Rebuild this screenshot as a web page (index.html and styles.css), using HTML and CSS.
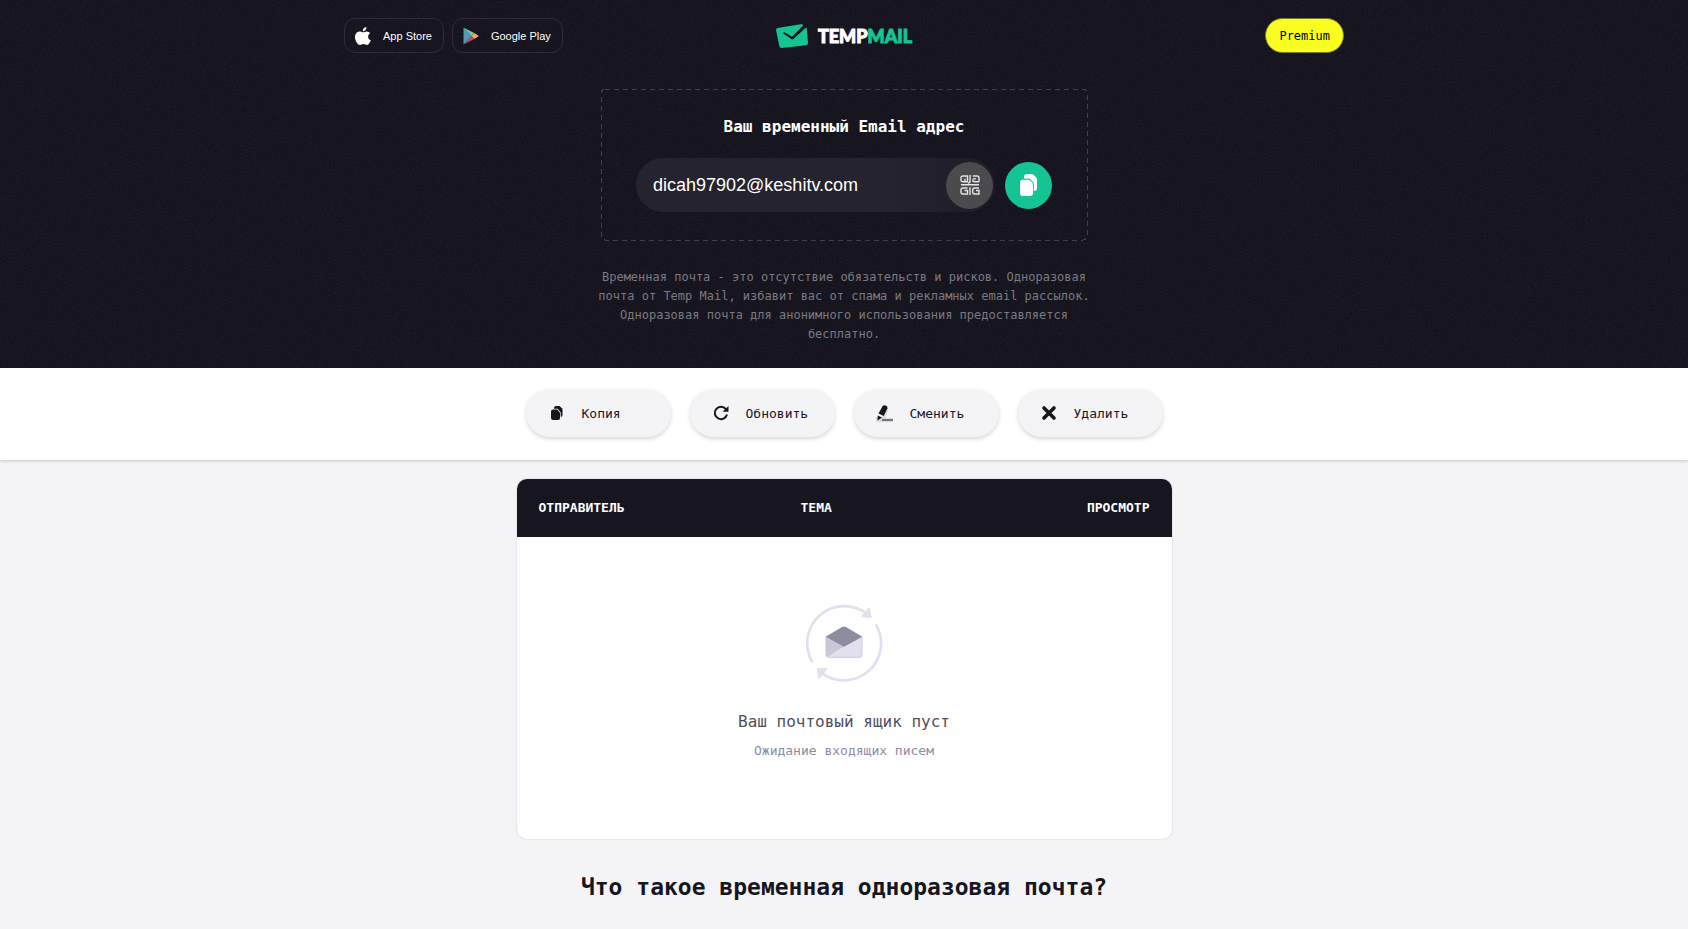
FILE: index.html
```html
<!DOCTYPE html>
<html lang="ru">
<head>
  <meta charset="UTF-8">
  <meta name="viewport" content="width=device-width, initial-scale=1">
  <title>Temp Mail - Временная почта</title>
  <link rel="stylesheet" href="styles.css">
</head>
<body>

  <div class="hero">
    <!-- Grain -->
    <svg class="grain" aria-hidden="true">
      <filter id="noise">
        <feTurbulence type="fractalNoise" baseFrequency="0.5" numOctaves="2" stitchTiles="stitch"/>
        <feColorMatrix type="saturate" values="0"/>
      </filter>
      <rect width="100%" height="100%" filter="url(#noise)"/>
    </svg>

    <!-- Header -->
    <header class="header">
      <div class="stores">
        <a class="store" href="#appstore">
          <svg width="16" height="18" viewBox="0 0 16 18" fill="#fff">
            <path d="M11.4 0c.2 1.2-.3 2.300-1 3.100-.7.8-1.600 1.300-2.600 1.200C7.700 3.100 8.200 2 8.900 1.300 9.500.6 10.600.1 11.400 0z"/>
            <path d="M8.200 5.300c.8 0 1.900-1 3.500-.9 1.500.1 2.700.7 3.400 1.800-3 1.900-2.400 5.800.7 7-.7 2-2.100 4.600-3.800 4.700-1.300 0-1.800-.8-3.500-.8s-2.200.8-3.500.8C2.500 18 0 13.500 0 10.200 0 6.600 2.300 4.500 4.700 4.500c1.500 0 2.600.8 3.500.8z"/>
          </svg>
          <span>App Store</span>
        </a>
        <a class="store" href="#googleplay">
          <svg width="16" height="18" viewBox="0 0 16 18">
            <path fill="#4c9dbb" d="M.5.5v17L8.500 9z"/>
            <path fill="#7fc8a0" d="M.5.5 8.500 9l2.600-2.900z"/>
            <path fill="#f5a862" d="M11.100 6.100 8.500 9l2.600 2.900L16 9z"/>
            <path fill="#d0495f" d="M.5 17.500 8.500 9l2.600 2.900z"/>
          </svg>
          <span>Google Play</span>
        </a>
      </div>

      <a class="logo" href="#home">
        <svg width="32" height="24" viewBox="0 0 96 72">
          <path fill="#14c493" d="M5 12 74 1q6-1 8 2l-4 5-30 30-22-13q-3-1-4 1t1 3l24 17q3 1 5-1L86 14l6-4 4 47q0 6-6 7l-73 8q-6 0-7-6L0 18q0-5 5-6z"/>
        </svg>
        <span class="logo-text">TEMP<span>MAIL</span></span>
      </a>

      <a class="premium" href="#premium">Premium</a>
    </header>

    <!-- Email address -->
    <main class="intro">
      <form class="mailbox">
        <svg class="dashes" aria-hidden="true"><rect width="100%" height="100%" rx="4"/></svg>
        <label class="mailbox-title" for="mail">Ваш временный Email адрес</label>
        <div class="mailbox-row">
          <div class="field">
            <input type="text" id="mail" value="dicah97902@keshitv.com" readonly>
            <button type="button" class="round qr" aria-label="QR код">
              <svg width="20" height="20" viewBox="0 0 20 20" fill="none" stroke="#e4e4e6" stroke-width="1.400">
                <path d="M5 3.700v3H3q-2 0-2-2V3q0-2 2-2h4.500v5.700H5M10 0v6q0 2-2 2M19 6.700h-4.300q-2 0-2-2M12.700 1H17q2 0 2 2v3.700M12.700 3.900H16"/>
                <path d="M1 9.800h18M7.500 13H3q-2 0-2 2v2q0 2 2 2h4.500v-3.500H4.500M10 12.300V20M19 13h-4.300q-2 0-2 2v2q0 2 2 2H19v-3.500h-3"/>
              </svg>
            </button>
          </div>
          <button type="button" class="round copy" aria-label="Копировать">
            <svg width="17" height="22" viewBox="0 0 17 22" fill="#fff">
              <path d="M4 4.500V3q0-3 3-3h4q2 0 3.200 1.200l1.600 1.800Q17 4.200 17 6v8q0 3-3 3h-.2V10.500q0-1.800-1.300-3L11 5.700Q9.800 4.500 8 4.500z"/>
              <path d="M3 5.700h5q1.500 0 2.500 1l1.300 1.400Q13 9.300 13 11v8q0 3-3 3H3q-3 0-3-3V8.700q0-3 3-3z"/>
            </svg>
          </button>
        </div>
      </form>
      <p class="about">Временная почта - это отсутствие обязательств и рисков. Одноразовая почта от Temp Mail, избавит вас от спама и рекламных email рассылок. Одноразовая почта для анонимного использования предоставляется бесплатно.</p>
    </main>
  </div>

  <!-- Actions -->
  <div class="actions">
    <button type="button" class="action">
      <svg width="16" height="16" viewBox="0 0 16 16" fill="#17161f">
        <path d="M5 3.800V3q0-2 2-2h3.500L13.500 3.800V10q0 2-1.800 2V7.500L8.700 3.800z"/>
        <path d="M4 4.500h4.200L11 7.700V13q0 2-2 2H4q-2 0-2-2V6.500q0-2 2-2z"/>
      </svg>
      <span>Копия</span>
    </button>
    <button type="button" class="action">
      <svg width="16" height="16" viewBox="0 0 16 16" fill="none" stroke="#17161f" stroke-width="2">
        <path d="M14 9.500A6.200 6.200 0 1 1 12.800 4"/>
        <path fill="#17161f" stroke="none" d="M15.500 1v5.800H9.600z"/>
      </svg>
      <span>Обновить</span>
    </button>
    <button type="button" class="action">
      <svg width="16" height="16" viewBox="0 0 16 16" overflow="visible">
        <path fill="#d9d9dc" d="M-1 12h6l5-8 1 1-3 8h8v4H-1z"/>
        <path fill="#17161f" d="M5.500 1.200Q6.500 0 8.500.4q2.400.8 2 2.800L6.700 11 1.500 8.500z"/>
        <path fill="#17161f" d="M.8 10.500l4.200 2L.5 15.500z"/>
        <path stroke="#55545c" stroke-width="1.500" d="M5 15h11"/>
      </svg>
      <span>Сменить</span>
    </button>
    <button type="button" class="action">
      <svg width="16" height="16" viewBox="0 0 16 16" stroke="#17161f" stroke-width="3.600" stroke-linecap="round">
        <path d="M3 3l10 10M13 3 3 13"/>
      </svg>
      <span>Удалить</span>
    </button>
  </div>

  <!-- Inbox -->
  <div class="inbox">
    <table>
      <thead>
        <tr>
          <th class="sender">Отправитель</th>
          <th>Тема</th>
          <th class="view">Просмотр</th>
        </tr>
      </thead>
      <tbody>
        <tr>
          <td class="empty" colspan="3">
            <svg width="80" height="80" viewBox="73 39 240 240" fill="none">
              <path stroke="#e2e0ee" stroke-width="8" stroke-linecap="round" d="M97 214A111 111 0 0 1 262 72M290 106A111 111 0 0 1 124 247"/>
              <path fill="#e2e0ee" stroke="#e2e0ee" stroke-width="4" stroke-linejoin="round" d="M268 54l6 28-27-2zM113 237l28-1-23 28z"/>
              <path fill="#c9c8d4" d="M138 140l55 31-50 31q-5-3-5-9z"/>
              <path fill="#e2e0ee" d="M248 140v53q0 10-10 10h-90l-5-1z"/>
              <path stroke="#c4c2d2" stroke-width="2" d="M139 141v52q0 9 9 9h90q9 0 9-9v-52"/>
              <path fill="#8c8da0" d="M138 140l49-29q6-3 12 0l49 29-55 31z"/>
            </svg>
            <p class="empty-title">Ваш почтовый ящик пуст</p>
            <p class="empty-text">Ожидание входящих писем</p>
          </td>
        </tr>
      </tbody>
    </table>
  </div>

  <h1>Что такое временная одноразовая почта?</h1>

</body>
</html>
```

FILE: styles.css
```css
* {
  box-sizing: border-box;
}
body {
  margin: 0;
  background: #f4f4f7;
  color: #17161f;
  font-family: 'DejaVu Sans Mono', monospace;
}
p {
  margin: 0;
}
a {
  text-decoration: none;
}
button {
  border: 0;
  padding: 0;
  font-family: inherit;
  cursor: pointer;
}
svg {
  flex: none;
}

/* Hero */
.hero {
  position: relative;
  background: #110f19;
  padding: 18px 20px 24px;
}
.grain {
  position: absolute;
  inset: 0;
  width: 100%;
  height: 100%;
  opacity: 0.07;
}
.header {
  position: relative;
  display: grid;
  grid-template-columns: 1fr auto 1fr;
  align-items: center;
  max-width: 1000px;
  margin: 0 auto;
}
.stores {
  display: flex;
  gap: 8px;
}
.store {
  display: flex;
  align-items: center;
  gap: 12px;
  height: 35px;
  padding: 0 11px 0 10px;
  border: 1px solid #2c2d3b;
  border-radius: 11px;
  color: #fff;
  font: 11px 'Liberation Sans', Arial, sans-serif;
}
.logo {
  display: flex;
  align-items: center;
  gap: 10px;
}
.logo-text {
  color: #fff;
  font: 900 18px/24px Lato, sans-serif;
  -webkit-text-stroke: 1px;
}
.logo-text span {
  color: #14c493;
}
.premium {
  justify-self: end;
  height: 35px;
  padding: 0 13px;
  border: 1px solid #77792a;
  border-radius: 18px;
  background: #f8ff20;
  color: #000;
  font-size: 12px;
  line-height: 35px;
}

.intro {
  position: relative;
  max-width: 492px;
  margin: 36px auto 0;
}
.mailbox {
  position: relative;
  margin: 0 3px;
  padding: 26px 35px 28px;
}
.dashes {
  position: absolute;
  inset: 0;
  width: 100%;
  height: 100%;
  overflow: visible;
}
.dashes rect {
  fill: none;
  stroke: #413f4c;
  stroke-dasharray: 5 4;
  shape-rendering: crispEdges;
}
.mailbox-title {
  display: block;
  margin-bottom: 19px;
  color: #fff;
  font-size: 16px;
  font-weight: bold;
  line-height: 24px;
  text-align: center;
}
.mailbox-row {
  position: relative;
  display: flex;
  align-items: center;
  gap: 10px;
}
.field {
  display: flex;
  flex: 1;
  align-items: center;
  min-width: 0;
  height: 54px;
  padding: 0 2px 0 17px;
  border-radius: 27px;
  background: linear-gradient(90deg, #25232e 70%, #1e1c27);
}
.field input {
  flex: 1;
  min-width: 0;
  padding: 0;
  border: 0;
  outline: 0;
  background: none;
  color: #fff;
  font: 18px 'Liberation Sans', Arial, sans-serif;
}
.round {
  display: flex;
  flex: none;
  align-items: center;
  justify-content: center;
  width: 47px;
  height: 47px;
  border-radius: 50%;
}
.qr {
  background: #4b4a4c;
}
.copy {
  background: #14c493;
}
.about {
  margin-top: 28px;
  color: #7b7a81;
  font-size: 12px;
  line-height: 19px;
  text-align: center;
}

/* Actions */
.actions {
  display: flex;
  flex-wrap: wrap;
  justify-content: center;
  gap: 19px;
  padding: 21px 20px 23px;
  background: #fff;
  box-shadow: 0 1px 3px rgba(0, 0, 0, 0.2);
}
.action {
  display: flex;
  align-items: center;
  gap: 17px;
  width: 145px;
  height: 48px;
  padding-left: 23px;
  border-radius: 24px;
  background: #f4f4f7;
  box-shadow: 0 2px 4px rgba(0, 0, 0, 0.16);
  color: #17161f;
  font-size: 13px;
}

/* Inbox */
.inbox {
  max-width: 655px;
  margin: 19px auto 0;
  overflow: hidden;
  border-radius: 10px;
  background: #fff;
  box-shadow: 0 0 2px #c8c6dc;
}
table {
  width: 100%;
  border-collapse: collapse;
  table-layout: fixed;
}
th {
  height: 58px;
  padding: 0 22px 2px;
  background: #17161f;
  color: #fff;
  font-size: 13px;
  text-align: left;
  text-transform: uppercase;
}
.sender {
  width: 40%;
}
.view {
  text-align: right;
}
.empty {
  padding: 66px 20px 78px;
  text-align: center;
}
.empty svg {
  display: block;
  margin: 0 auto;
}
.empty-title {
  margin-top: 27px;
  color: #4f4e5e;
  font-size: 16px;
  line-height: 24px;
}
.empty-text {
  margin-top: 7px;
  color: #8c8da6;
  font-size: 13px;
  line-height: 20px;
}
h1 {
  margin: 33px 20px 24px;
  font-size: 23px;
  line-height: 30px;
  text-align: center;
}
```
